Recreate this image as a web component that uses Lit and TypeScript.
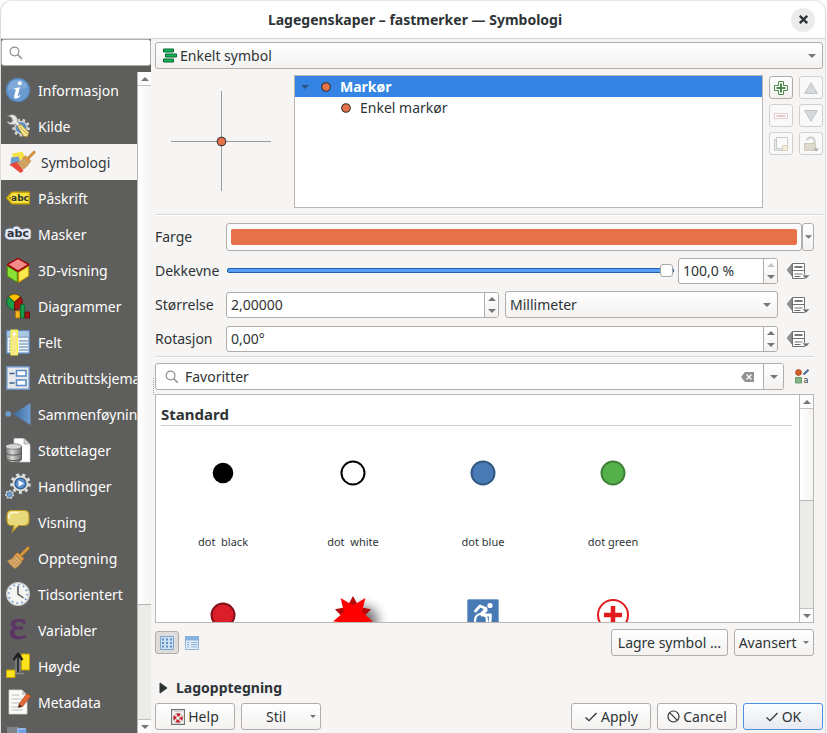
import { LitElement, html, svg, css, nothing } from "lit";
import { customElement, property, state } from "lit/decorators.js";
import { classMap } from "lit/directives/class-map.js";

/* ---------- shared pieces ---------- */

const down = html`<svg class="tri" width="8" height="4" viewBox="0 0 8 4" aria-hidden="true"><path d="M0 0h8L4 4z" fill="currentColor" /></svg>`;
const up = html`<svg class="tri" width="8" height="4" viewBox="0 0 8 4" aria-hidden="true"><path d="M0 4h8L4 0z" fill="currentColor" /></svg>`;

const magnifier = html`<svg width="14" height="14" viewBox="0 0 14 14" fill="none" stroke="#8c8f8e" aria-hidden="true">
  <circle cx="5.5" cy="5.5" r="4.4" stroke-width="1.2" /><path d="M8.8 8.8l4 4" stroke-width="1.6" />
</svg>`;

const check = html`<svg width="14" height="12" viewBox="0 0 14 12" fill="none" stroke="#2e3436" stroke-width="1.3" aria-hidden="true"><path d="M1.5 6.5l3.5 3.2L12.5 2" /></svg>`;

const base = css`
  * { box-sizing: border-box; }
  button, input, select { font: inherit; color: inherit; margin: 0; padding: 0; }
  button { border: 0; background: none; }
  svg { display: block; flex: none; }
  .tri { color: #747776; }
`;

/* ---------- sidebar icons, 24 by 24 ---------- */

const gear = (cx: number, cy: number, r: number, teeth: number, fill: string) => svg`
  <circle cx=${cx} cy=${cy} r=${r} fill="none" stroke=${fill} stroke-width=${r * 0.34}
    stroke-dasharray="${(Math.PI * r) / teeth} ${(Math.PI * r) / teeth}" />
  <circle cx=${cx} cy=${cy} r=${r * 0.9} fill=${fill} />`;

const brush = svg`
  <path d="M22.8.8c1 .8.8 1.8.2 2.500L15.400 10.800l-2-2L21 1.300c.5-.5 1.200-.9 1.800-.5z" fill="#d99a3c" stroke="#a86d1e" stroke-width=".7" />
  <path d="M11.500 6.500l6.500 6-2 2.800-7-6.800z" fill="#e2a04a" stroke="#a5691f" stroke-width=".7" />
  <path d="M9 8.500l7 6.800c-1.500 3-3.500 5.500-7 7.200C5.500 20.500 3 17.500 1.500 14.500 5 14 7.500 12 9 8.500z" fill="#dcae6e" stroke="#b27a34" stroke-width=".7" />
  <path d="M3.500 15.500l7.500 5.500M5.500 14l7.500 5.500M7.500 12l7 5.500M6 19.500L12 12.500M8.500 21.500l6-7M4 17l6-6.500" stroke="#b9854a" stroke-width=".6" fill="none" />`;

const icons = {
  info: svg`
    <circle cx="12" cy="12" r="12" fill="#6a9bd0" /><circle cx="12" cy="12" r="11.300" fill="none" stroke="#5585bd" stroke-width="1.200" />
    <path d="M2 9a10.500 10.500 0 0 1 20 0c-6 3-14 4-20 3z" fill="#8fb3dc" opacity=".6" />
    <circle cx="13.800" cy="5.300" r="2" fill="#fff" />
    <path d="M8.300 10.200l5.700-1-2.200 8.500c-.2 1 .6 1 2-.6l.7.5c-1.500 2.200-3 3-4.500 3-1.700 0-2.200-1-1.800-2.700l1.600-5.900c.1-.7-.2-.9-1.600-.9z" fill="#fff" />`,
  source: svg`
    ${gear(15, 13.500, 7.600, 9, "#d4d5d3")}
    <circle cx="15" cy="13.500" r="4" fill="#fff" stroke="#5b8fcb" stroke-width="3" />
    <path d="M1.500 2l3.800 1.500 1.400 3-1.600 2L1 7.500C2.500 11 6 11.500 9 10l11.500 11 2.300-2L11.500 7.800C12 4 10 .5 5.500.5z" fill="#e4e5e3" stroke="#7b7d79" stroke-width=".8" />
    <path d="M11.500 12.500l3.200-2.500 8.300 8.500-1.500 4.500-4-.5z" fill="#f3e08a" stroke="#8f7a2c" stroke-width=".9" />
    <path d="M14 13l7 7" stroke="#c9af4c" stroke-width="1" />`,
  symbology: svg`
    <path d="M3 3.500l10.500-2 3 6.500-12 5z" fill="#f9e14a" /><path d="M2 7.500l7.500-1 2.500 8-10.500 1.500z" fill="#6e9fd3" /><path d="M.5 14.500l8-3 6 9.500-3 2z" fill="#e8473b" />
    <g transform="translate(7 .5) scale(.82)">${brush}</g>`,
  label: svg`
    <path d="M.7 12L6 6.200h17.300v11.600H6z" fill="#f8e13c" stroke="#c4a000" stroke-width="1.300" /><circle cx="4" cy="12" r="1.100" fill="#8d7200" />
    <text x="14" y="15" text-anchor="middle" class="abc">abc</text>`,
  mask: svg`
    <text x="12" y="15" text-anchor="middle" class="abc big" fill="#3b3f45" stroke="#dfe5f6" stroke-width="5" stroke-linejoin="round" paint-order="stroke">abc</text>`,
  cube: svg`
    <path d="M12 0L23 6v12l-11 7L1 18V6z" fill="#8b1a1a" />
    <path d="M12 .5L22.500 6.500 12 13 1.500 6.500z" fill="#f38b8b" stroke="#a40000" stroke-width="1.200" />
    <path d="M1.300 8.200L11.300 14.300v10L1.300 18z" fill="#8ae234" stroke="#4e9a06" stroke-width="1" />
    <path d="M22.700 8.200L12.700 14.300v10l10-6.300z" fill="#fce94f" stroke="#c4a000" stroke-width="1" />`,
  diagram: svg`
    <path d="M8.500 8L2.500 2.800A8 8 0 0 1 14.500 2.800z" fill="#fcc200" stroke="#5a4a00" stroke-width=".7" />
    <path d="M8.500 8L2.500 2.800A8 8 0 0 0 8.500 16z" fill="#1a9c48" stroke="#0b4a20" stroke-width=".7" />
    <path d="M8.500 8l6-5.200A8 8 0 0 1 8.500 16z" fill="#a81410" stroke="#560605" stroke-width=".7" />
    <path d="M9.500 17h4.500v7H9.500z" fill="#fcb421" stroke="#a87400" stroke-width=".7" />
    <path d="M14.500 10.500H18.500V24h-4z" fill="#129c48" stroke="#0b5a28" stroke-width=".7" /><path d="M19 18h4.500v6H19z" fill="#a81410" stroke="#560605" stroke-width=".7" />`,
  fields: svg`
    <path d="M.8.800h22.400v22.400H.8z" fill="#f1f3f4" stroke="#5d87b8" stroke-width="1.400" /><path d="M1.500 1.500h21v5h-21z" fill="#a9c8e6" />
    <path d="M1.500 7h21" stroke="#5d87b8" /><path d="M3 11h5M3 14h5M3 17h5M3 20h5M13 11h9M13 14h9M13 17h9M13 20h9" stroke="#89a8c9" stroke-width="1.400" />
    <path d="M5 0h6.500v25H5z" fill="#f6e98c" stroke="#f2ee4c" stroke-width="1.200" /><circle cx="8.200" cy="4" r="1.600" fill="#fff" />`,
  form: svg`
    <path d="M.8.800h22.400v22.400H.8z" fill="#e6e8ea" stroke="#6d93c2" stroke-width="1.400" />
    <path d="M3.500 7.500h5M3.500 17h5" stroke="#3b5f8a" stroke-width="1.600" /><path d="M10.500 4.500h9.500v5.500h-9.500zM10.500 14h9.500v5.500h-9.500z" fill="#fff" stroke="#5b8bc4" stroke-width="1.600" />`,
  join: svg`
    <circle cx="2.200" cy="12" r="2.800" fill="#6d9dd3" /><path d="M7 12L24.500 1v22z" fill="url(#joinFill)" />
    <defs><linearGradient id="joinFill"><stop stop-color="#3a689c" /><stop offset="1" stop-color="#6d9dd3" /></linearGradient></defs>`,
  storage: svg`
    <path d="M8 .5h10l6 5.500v18H8z" fill="#fff" stroke="#d3d3d3" stroke-width=".6" /><path d="M18 .5V6h6z" fill="#d8d8d6" stroke="#8a8a88" stroke-width=".6" />
    <path d="M-.5 8v13c0 4.500 16 4.500 16 0V8z" fill="url(#tank)" stroke="#4a4c4a" stroke-width=".8" />
    <ellipse cx="7.500" cy="8.500" rx="8" ry="2.800" fill="#d7d8d6" stroke="#666" stroke-width=".7" />
    <path d="M-.5 14.500c2 3.500 14 3.500 16 0M-.5 20c2 3.500 14 3.500 16 0" fill="none" stroke="#50524f" stroke-width="1" />
    <defs><linearGradient id="tank"><stop stop-color="#6c6e6b" /><stop offset=".4" stop-color="#d9dad8" /><stop offset="1" stop-color="#6c6e6b" /></linearGradient></defs>`,
  action: svg`
    ${gear(14.500, 9.500, 8.800, 9, "#dcdedc")}<circle cx="14.500" cy="9.500" r="5.400" fill="#5b8fcb" stroke="#33608f" stroke-width="1.400" /><path d="M12.500 6.200l5.500 3.300-5.500 3.300z" fill="#fff" />
    ${gear(3.500, 20.500, 3.900, 7, "#dcdedc")}<circle cx="3.500" cy="20.500" r="2.500" fill="#6d9dd3" stroke="#33608f" stroke-width=".6" />`,
  tip: svg`
    <path d="M6 .5h12c3.500 0 5 1.500 5 5v5c0 3.500-1.500 5-5 5h-5.500L6.500 21.500 8 15.500H6c-3.500 0-5-1.500-5-5v-5c0-3.500 1.500-5 5-5z" fill="#e8da7c" stroke="#bb9a1c" stroke-width="1.200" />
    <path d="M3 8c-.5-4 1-5.500 4-5.500h5" fill="none" stroke="#fbf7d4" stroke-width="1.600" stroke-linecap="round" />`,
  brush,
  clock: svg`
    <circle cx="12" cy="12" r="11.400" fill="#f3f3f1" stroke="#c9cac8" stroke-width="1.200" />
    <circle cx="12" cy="12" r="9.300" fill="none" stroke="#5b8fcb" stroke-width="1.800" stroke-dasharray="1.400 3.470" />
    <path d="M12 4v8l5.500 4" fill="none" stroke="#555753" stroke-width="1.500" />`,
  variables: svg`<text x="11.500" y="21" text-anchor="middle" class="eps">ε</text>`,
  elevation: svg`
    <path d="M15.500 0h8v16h-8z" fill="#fce21c" stroke="#c4a000" /><path d="M.5 16H9v7.500H.5z" fill="#fce21c" stroke="#c4a000" />
    <path d="M9 19.500h9" stroke="#888a85" stroke-width="1.500" /><path d="M12 18V4" stroke="#9a9c98" stroke-width="5" /><path d="M12 18V2" stroke="#2e3436" stroke-width="2.600" /><path d="M7.500 6L12 0l4.500 6" fill="none" stroke="#1c1f20" stroke-width="2.400" />`,
  metadata: svg`
    <path d="M3 0h13l5 5v19H3z" fill="#fbfbfa" stroke="#d3d7cf" stroke-width=".8" /><path d="M16 0v5h5z" fill="#c9cbc8" />
    <path d="M5.500 5h8M5.500 9h10M5.500 13h8M5.500 17h9M5.500 20h11" stroke="#babdb6" stroke-width="1.200" />
    <path d="M13 14L21 3.500l4 2.500-8.500 10.500-4 1z" fill="#e06a38" stroke="#a33d12" stroke-width=".7" /><path d="M12.500 17.500l.7-3.200 3 2z" fill="#333" />`,
  server: svg`<path d="M1 1h12v12H1z" fill="#7e8488" /><path d="M11 2h9v11h-9z" fill="#8cb4ea" /><path d="M13 4h8v9h-8z" fill="#5b8fdb" opacity=".6" />`,
};

const sections: { name: string; icon: keyof typeof icons; untitled?: boolean }[] = [
  { name: "Informasjon", icon: "info" },
  { name: "Kilde", icon: "source" },
  { name: "Symbologi", icon: "symbology" },
  { name: "Påskrift", icon: "label" },
  { name: "Masker", icon: "mask" },
  { name: "3D-visning", icon: "cube" },
  { name: "Diagrammer", icon: "diagram" },
  { name: "Felt", icon: "fields" },
  { name: "Attributtskjema", icon: "form" },
  { name: "Sammenføyninger", icon: "join" },
  { name: "Støttelager", icon: "storage" },
  { name: "Handlinger", icon: "action" },
  { name: "Visning", icon: "tip" },
  { name: "Opptegning", icon: "brush" },
  { name: "Tidsorientert", icon: "clock" },
  { name: "Variabler", icon: "variables" },
  { name: "Høyde", icon: "elevation" },
  { name: "Metadata", icon: "metadata" },
  { name: "Server", icon: "server", untitled: true },
];

/* ---------- scroll bar ---------- */

@customElement("scroll-rail")
export class ScrollRail extends LitElement {
  @property({ type: Number }) share = 50;
  static styles = [base, css`
    :host { display: flex; flex-direction: column; flex: none; width: 14px; border-left: 1px solid #b9b6b3; background: #ebebea; }
    button { display: grid; place-items: center; height: 13px; background: #fcfcfc; }
    .track { flex: 1; display: flex; flex-direction: column; border: 1px solid #c4c1be; border-width: 1px 0; }
    .thumb { background: linear-gradient(90deg, #fff, #f5f4f3); border-bottom: 1px solid #b9b6b3; }
  `];
  render() {
    return html`<button aria-label="Rull opp">${up}</button>
      <div class="track"><div class="thumb" style="height:${this.share}%"></div></div>
      <button aria-label="Rull ned">${down}</button>`;
  }
}

/* ---------- section list ---------- */

@customElement("section-list")
export class SectionList extends LitElement {
  @state() private current = "Symbologi";
  static styles = [base, css`
    :host { display: flex; flex-direction: column; flex: none; width: 150px; min-height: 0; background: #5e5e5c; }
    .search { display: flex; align-items: center; gap: 4px; height: 27px; padding: 0 7px; background: #fff; border: 1px solid #b0adaa; border-radius: 3px; flex: none; }
    .search input { flex: 1; min-width: 0; border: 0; outline: 0; background: none; }
    .body { flex: 1; display: flex; min-height: 0; margin-top: 6px; }
    nav { flex: 1; min-width: 0; overflow: hidden; }
    .item { display: flex; align-items: center; gap: 8px; width: 100%; height: 36px; padding-left: 5px; color: #fff; white-space: nowrap; text-align: left; }
    .item span { padding-top: 2px; }
    .item.on { background: #f6f5f4; color: #333739; padding-left: 8px; }
    .item svg { overflow: visible; }
    .abc { font: bold 9px "DejaVu Sans", sans-serif; fill: #2e3436; }
    .abc.big { font-size: 11px; }
    .eps { font: 42px "Liberation Serif", serif; fill: #5c3566; stroke: #5c3566; }
  `];
  render() {
    return html`
      <label class="search">${magnifier}<input type="text" aria-label="Søk" /></label>
      <div class="body">
        <nav>
          ${sections.map((s) => html`<button class=${classMap({ item: true, on: s.name === this.current })}
              aria-label=${s.name} @click=${() => (this.current = s.name)}>
              <svg width="24" height="24" viewBox="0 0 24 24" aria-hidden="true">${icons[s.icon]}</svg>
              ${s.untitled ? nothing : html`<span>${s.name}</span>`}
            </button>`)}
        </nav>
        <scroll-rail share="82"></scroll-rail>
      </div>`;
  }
}

/* ---------- number box with steppers ---------- */

@customElement("number-box")
export class NumberBox extends LitElement {
  @property() value = "";
  @property() name = "";
  @property({ type: Boolean }) full = false;
  static styles = [base, css`
    :host { display: flex; height: 26px; min-width: 0; background: #fff; border: 1px solid #b0adaa; border-radius: 3px; overflow: hidden; }
    input { flex: 1; min-width: 0; width: 0; padding-left: 4px; border: 0; outline: 0; background: none; }
    .steps { display: flex; flex-direction: column; width: 14px; border-left: 1px solid #b0adaa; background: linear-gradient(#fff, #f3f2f1); }
    .steps button { flex: 1; display: grid; place-items: center; min-height: 0; }
    .steps button:disabled { opacity: .4; }
  `];
  render() {
    return html`<input type="text" .value=${this.value} aria-label=${this.name} />
      <div class="steps"><button aria-label="Opp" ?disabled=${this.full}>${up}</button><button aria-label="Ned">${down}</button></div>`;
  }
}

/* ---------- symbol pictures ---------- */

const star = (outer: number, inner: number, turn: number) =>
  Array.from({ length: 10 }, (_, i) => {
    const r = i % 2 ? inner : outer;
    const a = ((i * 36 + turn - 90) * Math.PI) / 180;
    return `${(r * Math.cos(a)).toFixed(2)},${(r * Math.sin(a)).toFixed(2)}`;
  }).join(" ");

const symbols = [
  { name: "dot  black", art: svg`<circle r="10.300" />` },
  { name: "dot  white", art: svg`<circle r="11.500" fill="#fff" stroke="#000" stroke-width="2" />` },
  { name: "dot blue", art: svg`<circle r="11.500" fill="#487bb6" stroke="#325780" stroke-width="2" />` },
  { name: "dot green", art: svg`<circle r="11.500" fill="#54b04a" stroke="#3d8035" stroke-width="2" />` },
  { name: "", art: svg`<circle r="11.500" fill="#db1e2a" stroke="#801119" stroke-width="2" />` },
  { name: "", art: svg`<defs><filter id="soft" x="-1" y="-1" width="3" height="3"><feGaussianBlur stdDeviation="6" /></filter></defs>
      <circle cx="10" cy="6" r="15" fill="#000" opacity=".55" filter="url(#soft)" />
      <polygon points=${star(19, 10, 0)} fill="#b80808" /><polygon points=${star(21, 9.5, 36)} fill="#f00" />` },
  { name: "", art: svg`<rect x="-15.500" y="-15.500" width="31" height="31" rx="1" fill="#487bb6" stroke="#6c98c8" stroke-width=".6" />
      <circle cx="7" cy="-9.500" r="2.600" fill="#fff" />
      <path d="M-7.500-4l4.500-5 6 2.500L-1 0h8.500L7 7" fill="none" stroke="#fff" stroke-width="2.800" stroke-linejoin="round" stroke-linecap="round" />
      <path d="M3.500-6L-2 0" stroke="#fff" stroke-width="4" />
      <circle cx="-2" cy="5" r="6" fill="none" stroke="#fff" stroke-width="2.200" />` },
  { name: "", art: svg`<circle r="15" fill="#fff" stroke="#e31a1c" stroke-width="2" /><path d="M-9 0H9M0-9V9" stroke="#e31a1c" stroke-width="4.500" />` },
];

const override = html`<button class="override" aria-label="Datadefinert overstyring">
  <svg width="23" height="18" viewBox="0 0 23 18" aria-hidden="true">
    <path d="M0 8l5-6v12z" fill="#8f9190" stroke="#6a6c6b" stroke-width=".6" />
    <path d="M5.500 1.500h12v15h-12zM5.500 8.500h12" fill="#fff" stroke="#6f7271" />
    <path d="M7.500 5h8" stroke="#555857" stroke-width="1.600" /><path d="M7.500 12h8M7.500 14.500h6" stroke="#6f7271" />
    <path d="M15 13h8l-4 4z" fill="#6f7271" stroke="#f6f5f4" stroke-width=".6" />
  </svg></button>`;

const dot = html`<svg width="10" height="10" viewBox="0 0 10 10" aria-hidden="true"><circle cx="5" cy="5" r="4.300" fill="#e77148" stroke="#33302e" stroke-width="1.100" /></svg>`;

@customElement("app-root")
export class AppRoot extends LitElement {
  static styles = [base, css`
    :host { display: block; height: 100vh; padding: 1px 1px 0 0; background: #fbfbfb; font: 14px/20px "Noto Sans", sans-serif; color: #2e3436; }
    .window { height: 100%; display: flex; flex-direction: column; border: 1px solid #dedddb; border-width: 0 1px 1px; border-radius: 12px 12px 0 0; box-shadow: 0 -1px 0 #e6e6e5; background: #f6f5f4; overflow: hidden; }
    header { display: flex; align-items: center; height: 38px; padding: 0 10px; background: #fff; border-bottom: 1px solid #d9d7d5; flex: none; }
    h1 { flex: 1; margin: 0 0 0 28px; font-size: 14px; text-align: center; }
    .close { display: grid; place-items: center; width: 24px; height: 24px; border-radius: 50%; background: #ebebeb; }
    .main { flex: 1; display: flex; min-height: 0; }
    .grip { width: 4px; flex: none; display: flex; align-items: center; justify-content: center; }
    .grip i { height: 17px; border-left: 1px dotted #a5a3a0; }
    .page { flex: 1; min-width: 0; display: flex; flex-direction: column; padding: 3px 2px 3px 0; }

    .btn { display: flex; align-items: center; justify-content: center; gap: 3px; height: 27px; min-width: 80px; white-space: nowrap; }
    .btn, .combo, .tool { background: linear-gradient(#fff, #f3f2f1); border: 1px solid #b0adaa; border-radius: 3px; }
    .btn .tri { width: 6px; height: 3px; }
    .combo { display: flex; align-items: center; height: 27px; padding: 0 6px 0 4px; min-width: 0; }
    .combo select { flex: 1; min-width: 0; border: 0; outline: 0; background: none; appearance: none; }
    .kind { gap: 3px; padding-left: 7px; flex: none; }
    .rule { height: 2px; border-top: 1px solid #dad8d6; background: #fff; flex: none; }

    .top { display: flex; height: 133px; margin: 6px 0; flex: none; }
    .preview { width: 139px; display: flex; justify-content: center; align-items: center; padding: 0 7px 1px 0; }
    .tree { flex: 1; margin: 0; padding: 0; list-style: none; background: #fff; border: 1px solid #b9b6b3; }
    .tree li { display: flex; align-items: center; height: 21px; gap: 9px; }
    .tree .sel { background: #3584e4; color: #fff; font-weight: bold; padding-left: 6px; }
    .tree .sel .tri { color: #2a5480; margin-right: 3px; }
    .tree .leaf { padding-left: 46px; }
    .tools { display: grid; grid-template-columns: 24px 24px; grid-auto-rows: 23px; gap: 5px 6px; margin: 1px 0 0 6px; align-content: start; }
    .tool { display: grid; place-items: center; }
    .tool:disabled { border-color: #d2d0ce; background: #faf9f9; }

    .lower { flex: 1; min-height: 0; display: flex; flex-direction: column; margin-right: 9px; }
    .form { display: grid; grid-template-columns: 71px minmax(0, 1fr) auto; grid-auto-rows: 27px; gap: 7px 0; align-items: center; margin: 7px 0 4px; }
    .color { grid-column: 2 / 4; display: flex; height: 28px; }
    .swatch { flex: 1; padding: 5px 4px; background: #fcfbfb; border: 1px solid #b0adaa; border-radius: 3px; display: flex; }
    .swatch span { flex: 1; background: #e77148; border-radius: 2px; }
    .more { width: 12px; padding: 0; display: grid; place-items: center; }
    .more .tri { width: 7px; }
    .slide { display: flex; align-items: center; gap: 4px; }
    .slide number-box { flex: none; width: 100px; }
    .pair { display: grid; grid-template-columns: minmax(0, 1fr) minmax(0, 1fr); align-items: center; gap: 6px; }
    .override { width: 36px; display: grid; place-items: center; padding-left: 5px; }
    input[type="range"] { appearance: none; flex: 1; min-width: 0; height: 14px; background: none; }
    input[type="range"]::-webkit-slider-runnable-track { height: 5px; margin-left: 1px; background: #57a0f5; border: 1px solid #2060b0; border-radius: 2px; }
    input[type="range"]::-webkit-slider-thumb { appearance: none; width: 13px; height: 13px; margin-top: -5px; background: #fff; border: 1px solid #a9a6a3; border-radius: 3px; }

    .filter { display: flex; align-items: center; margin: 5px 0 4px; }
    .field { flex: 1; display: flex; align-items: center; height: 27px; background: #fff; border: 1px solid #b0adaa; border-radius: 3px; padding-left: 9px; gap: 6px; overflow: hidden; }
    .field input { flex: 1; min-width: 0; border: 0; outline: 0; background: none; }
    .field .open { align-self: stretch; width: 20px; display: grid; place-items: center; border-left: 1px solid #b0adaa; background: linear-gradient(#fff, #f3f2f1); margin-left: 3px; }
    .styles { width: 30px; padding-left: 6px; display: grid; place-items: center; }

    .gallery { flex: 1; min-height: 120px; display: flex; background: #fff; border: 1px solid #b9b6b3; overflow: hidden; }
    .items { flex: 1; min-width: 0; overflow: hidden; }
    h2 { margin: 0 7px 0 5px; padding: 9px 0 0; font-size: 15px; line-height: 21px; border-bottom: 1px solid #d0cecc; }
    .cells { display: grid; grid-template-columns: repeat(auto-fill, 130px); padding-left: 2px; grid-auto-rows: 142px; }
    .cell { display: flex; flex-direction: column; align-items: center; padding-top: 17px; font-size: 11px; white-space: pre; overflow: visible; justify-content: flex-start; }
    .cell svg { overflow: visible; margin-bottom: 29px; }

    .actions { display: flex; align-items: center; gap: 6px; margin-top: 6px; }
    .actions .tool { width: 24px; height: 23px; }
    .actions .on { background: #dfdddb; }
    .actions .flat { border: 0; background: none; width: 14px; }
    .push { margin-left: auto; }
    .save { padding: 0 6px; }
    .fold { display: flex; align-items: center; gap: 8px; height: 20px; margin: 22px 0 5px; padding-left: 4px; font-weight: bold; flex: none; }
    footer { display: flex; gap: 6px; flex: none; }
    .style { justify-content: flex-end; gap: 24px; padding-right: 4px; }
    .ok { border-color: #4a90e2; background: linear-gradient(#fcfdfe, #e6e9f0); }
  `];

  render() {
    return html`<div class="window">
      <header>
        <h1>Lagegenskaper – fastmerker — Symbologi</h1>
        <button class="close" aria-label="Lukk"><svg width="9" height="9" viewBox="0 0 9 9" stroke="#2e3436" stroke-width="2.300"><path d="M.8.800l7.400 7.400M8.200.800L.8 8.200" /></svg></button>
      </header>
      <div class="main">
        <section-list></section-list>
        <div class="grip"><i></i></div>
        <div class="page">
          <div class="combo kind">
            <svg width="14" height="15" viewBox="0 0 14 15" fill="#0fb858" stroke="#06622e" aria-hidden="true"><path d="M.5 1h10v3h-10zM2.500 6h11v3h-11zM.5 11h10v3h-10z" /></svg>
            <select aria-label="Symboltype"><option>Enkelt symbol</option></select>${down}
          </div>
          ${this.symbolTree()}
          <div class="rule"></div>
          <div class="lower">${this.form()}<div class="rule"></div>${this.gallery()}</div>
          <div class="fold"><svg width="9" height="12" viewBox="0 0 9 12" aria-hidden="true"><path d="M1 1l7 5-7 5z" fill="#2e3436" stroke="#2e3436" /></svg>Lagopptegning</div>
          <footer>
            <button class="btn"><svg width="14" height="16" viewBox="0 0 14 16" aria-hidden="true">
              <path d="M.6.600h12.800v14.800H.6z" fill="#fbfbfa" stroke="#6e706d" stroke-width="1.100" /><path d="M3 2.700h8" stroke="#c5c7c4" />
              <circle cx="7" cy="9" r="3.300" fill="none" stroke="#fff" stroke-width="2.400" /><circle cx="7" cy="9" r="3.300" fill="none" stroke="#d3202a" stroke-width="2.400" stroke-dasharray="3.400 1.780" stroke-dashoffset="1.700" />
              <circle cx="7" cy="9" r="4.700" fill="none" stroke="#8a3035" stroke-width=".5" /><circle cx="7" cy="9" r="1.900" fill="none" stroke="#8a3035" stroke-width=".5" />
            </svg>Help</button>
            <button class="btn style">Stil${down}</button>
            <button class="btn push">${check}Apply</button>
            <button class="btn"><svg width="13" height="13" viewBox="0 0 13 13" fill="none" stroke="#2e3436" stroke-width="1.200" aria-hidden="true"><circle cx="6.500" cy="6.500" r="5.500" /><path d="M2.600 2.600l7.800 7.800" /></svg>Cancel</button>
            <button class="btn ok">${check}OK</button>
          </footer>
        </div>
      </div>
    </div>`;
  }

  private symbolTree() {
    return html`<div class="top">
      <div class="preview"><svg width="100" height="100" viewBox="0 0 100 100" aria-hidden="true"><path d="M0 50.500h100M50.500 0v100" stroke="#9a9a9a" /><circle cx="50.500" cy="50.500" r="4.300" fill="#e77148" stroke="#33302e" stroke-width="1.100" /></svg></div>
      <ul class="tree" role="tree">
        <li class="sel" role="treeitem" aria-expanded="true">${down}${dot}<span>Markør</span></li>
        <li class="leaf" role="treeitem">${dot}<span>Enkel markør</span></li>
      </ul>
      <div class="tools">
        <button class="tool" aria-label="Legg til lag"><svg width="14" height="14" viewBox="0 0 14 14" stroke="#4d8a4d"><path d="M4.500.500h5v4h4v5h-4v4h-5v-4h-4v-5h4z" fill="#fff" /><path d="M7 2.500v9M2.500 7h9" stroke-width="2" /></svg></button>
        <button class="tool" disabled aria-label="Flytt opp"><svg width="14" height="12" viewBox="0 0 14 12"><path d="M7 .8L13.300 11.400H.7z" fill="#d6d9db" stroke="#bcc0c2" /></svg></button>
        <button class="tool" disabled aria-label="Fjern lag"><svg width="14" height="6" viewBox="0 0 14 6"><path d="M.5.500h13v5H.5z" fill="#fff" stroke="#e3cccf" /><path d="M2.500 3h9" stroke="#e6c9cd" stroke-width="2" /></svg></button>
        <button class="tool" disabled aria-label="Flytt ned"><svg width="14" height="12" viewBox="0 0 14 12"><path d="M7 11.200L13.300.6H.7z" fill="#d6d9db" stroke="#bcc0c2" /></svg></button>
        <button class="tool" disabled aria-label="Dupliser"><svg width="14" height="14" viewBox="0 0 14 14"><path d="M.5 2.500h10v11H.5z" fill="#e9eaea" stroke="#c8c9c9" /><path d="M2.500.500h11v11h-11z" fill="#fafafa" stroke="#c8c9c9" /><path d="M8.500 8.500h5v5h-5z" fill="#f2eedc" stroke="#d6d1bd" /></svg></button>
        <button class="tool" disabled aria-label="Lås farge"><svg width="16" height="16" viewBox="0 0 16 16"><path d="M4 4.500C4 1 11.500 0 11.500 5v3" fill="none" stroke="#d3d5d5" stroke-width="2.400" /><path d="M1.500 7.500h11v7h-11z" fill="#ddd9cc" stroke="#cfcab8" /><path d="M10.500 12.500h5.500l-2.700 3z" fill="#a9abaa" /></svg></button>
      </div>
    </div>`;
  }

  private form() {
    return html`<div class="form">
      <span>Farge</span>
      <div class="color"><button class="swatch" aria-label="Farge"><span></span></button><button class="tool more" aria-label="Fargevalg">${down}</button></div>
      <label for="opacity">Dekkevne</label>
      <div class="slide"><input id="opacity" type="range" min="0" max="100" .value=${"100"} /><number-box name="Dekkevne" value="100,0 %" full></number-box></div>
      ${override}
      <span>Størrelse</span>
      <div class="pair"><number-box name="Størrelse" value="2,00000"></number-box>
        <div class="combo"><select aria-label="Enhet"><option>Millimeter</option></select>${down}</div></div>
      ${override}
      <span>Rotasjon</span>
      <number-box name="Rotasjon" value="0,00°"></number-box>
      ${override}
    </div>`;
  }

  private gallery() {
    return html`
      <div class="filter">
        <div class="field">${magnifier}<input type="text" aria-label="Symbolgruppe" .value=${"Favoritter"} />
          <button aria-label="Tøm"><svg width="13" height="10" viewBox="0 0 13 10"><path d="M0 5l4-5h9v10H4z" fill="#8f9291" /><path d="M5.500 2.500l5 5M10.500 2.500l-5 5" stroke="#fff" stroke-width="1.300" /></svg></button>
          <button class="open" aria-label="Vis grupper">${down}</button>
        </div>
        <button class="styles" aria-label="Stilbehandler"><svg width="15" height="15" viewBox="0 0 15 15"><circle cx="3.500" cy="3.500" r="3" fill="#cf5f2c" stroke="#a9481c" stroke-width=".7" /><path d="M.5 8.500h6v5.500h-6z" fill="#86b587" stroke="#6c9c6e" /><path d="M8.500 5.500L13.500.8" stroke="#4d6f9e" stroke-width="2.200" /><text x="8.500" y="14" font-family="DejaVu Sans" font-size="8" fill="#2e3436">a</text></svg></button>
      </div>
      <div class="gallery">
        <div class="items">
          <h2>Standard</h2>
          <div class="cells">${symbols.map((s) => html`<button class="cell" aria-label=${s.name || "symbol"}><svg width="26" height="60" viewBox="-13 -30 26 60" aria-hidden="true">${s.art}</svg>${s.name}</button>`)}</div>
        </div>
        <scroll-rail share="46"></scroll-rail>
      </div>
      <div class="actions">
        <button class="tool on" aria-label="Ikonvisning"><svg width="14" height="14" viewBox="0 0 14 14"><path d="M.5.500h13v13H.5z" fill="#cfe0f0" stroke="#7ba5d1" /><path d="M2 3.500h10M2 7h10M2 10.500h10" stroke="#5b8cc4" stroke-width="2" stroke-dasharray="2 2" /></svg></button>
        <button class="tool flat" aria-label="Listevisning"><svg width="14" height="14" viewBox="0 0 14 14"><path d="M.5.500h13v13H.5z" fill="#e6f0f8" stroke="#8fb3d8" /><path d="M0 0h14v4.500H0z" fill="#85b3dd" /><path d="M2 6.500h2.500M2 8.700h2.500M2 11h2.500M6 6.500h6.500M6 8.700h6.500M6 11h6.500" stroke="#8fb3d8" stroke-width="1.200" /></svg></button>
        <button class="btn push save">Lagre symbol …</button>
        <button class="btn">Avansert&nbsp;${down}</button>
      </div>`;
  }
}
